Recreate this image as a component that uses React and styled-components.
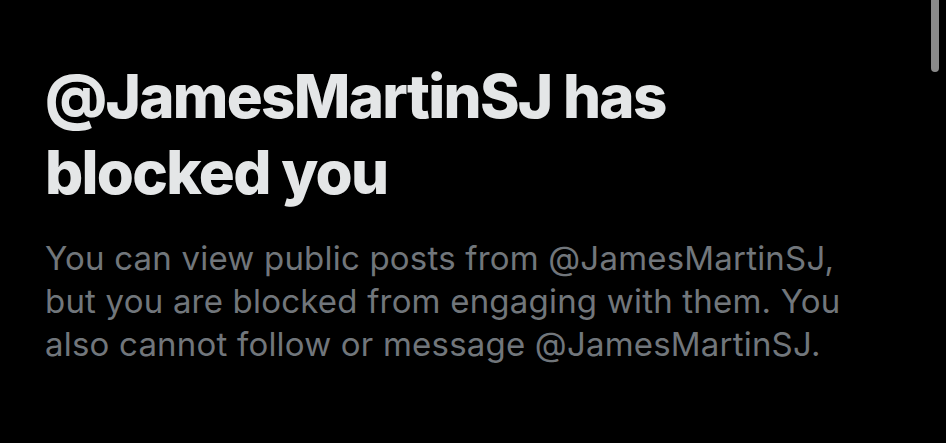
import React from 'react';
import styled, { createGlobalStyle } from 'styled-components';

const GlobalStyle = createGlobalStyle`
html, body {
  margin: 0;
  padding: 0;
  background-color: #000000;
}
body {
  font-family: Inter, "Liberation Sans", Arial, sans-serif;
}
`;

const Screen = styled.div`
position: relative;
width: 946px;
height: 443px;
overflow: hidden;
background-color: #000000;
box-sizing: border-box;
padding: 58px 45px 0 45px;
display: flex;
flex-direction: column;
gap: 27px;
`;

const Title = styled.h1`
margin: 0;
font-size: 60px;
line-height: 76px;
font-weight: 800;
letter-spacing: -1.7px;
color: #e4e6e7;
`;

const Message = styled.p`
margin: 0;
font-size: 33px;
line-height: 43px;
font-weight: 400;
letter-spacing: 0.2px;
color: #71767b;
`;

const ScrollThumb = styled.div`
position: absolute;
top: 0;
right: 7px;
width: 8px;
height: 72px;
border-radius: 0 0 4px 4px;
background-color: #8a8a8a;
`;

export default function App() {
  const handle = '@JamesMartinSJ';
  return (
    <>
      <GlobalStyle />
      <Screen>
        <Title>
          {handle} has<br />blocked you
        </Title>
        <Message>
          You can view public posts from {handle},<br />
          but you are blocked from engaging with them. You<br />
          also cannot follow or message {handle}.
        </Message>
        <ScrollThumb />
      </Screen>
    </>
  );
}
